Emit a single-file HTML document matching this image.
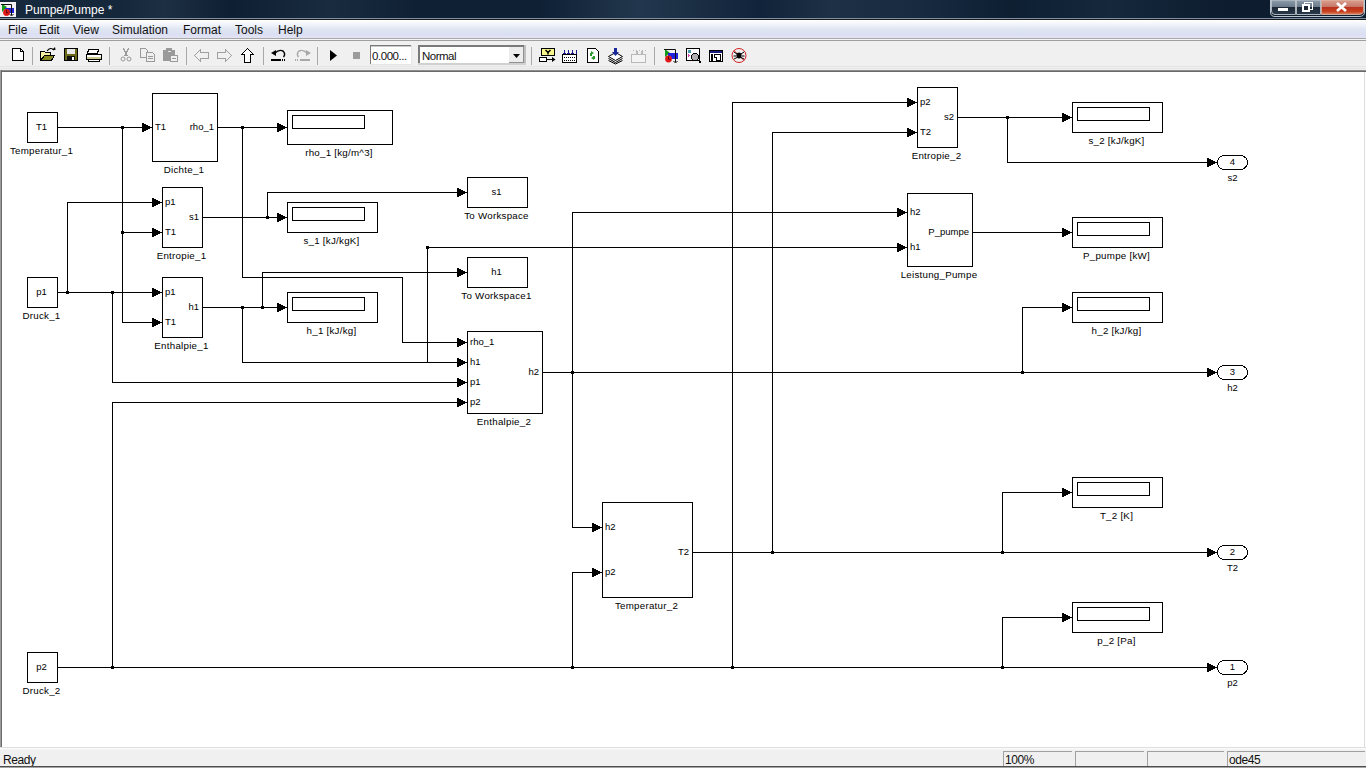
<!DOCTYPE html>
<html><head><meta charset="utf-8">
<style>
html,body{margin:0;padding:0;}
body{width:1366px;height:768px;position:relative;overflow:hidden;background:#fff;font-family:"Liberation Sans",sans-serif;}
.abs{position:absolute;}
#title{left:0;top:0;width:1366px;height:18px;background:linear-gradient(90deg,#17293d 0px,#15273b 120px,#1d2f43 165px,#0f1f33 230px,#192b3f 330px,#0f2035 420px,#0f2035 540px,#22374d 640px,#11233a 760px,#1d3045 830px,#172a40 920px,#0e1f32 1010px,#15283c 1110px,#0d1c2e 1230px,#0d1c2e 1366px);}
#title .t{position:absolute;left:25px;top:2px;color:#fff;font-size:12px;line-height:16px;}
#tl1{left:0;top:18px;width:1366px;height:1px;background:#7d8fa3;}
#tl2{left:0;top:19px;width:1366px;height:1px;background:#1a1a1a;}
#menu{left:0;top:20px;width:1366px;height:18px;background:linear-gradient(180deg,#ffffff 0%,#f4f6fb 20%,#dfe6f3 50%,#dcdff3 80%,#e2e4f4 100%);}
#menu span{position:absolute;top:3px;font-size:12px;line-height:14px;color:#111;}
#ml1{left:0;top:38px;width:1366px;height:1px;background:#a9a9a9;}
#ml2{left:0;top:39px;width:1366px;height:1px;background:#f4f4f4;}
#ml3{left:0;top:40px;width:1366px;height:1px;background:#a0a0a0;}
#tool{left:0;top:41px;width:1366px;height:30px;background:#f0f0f0;}
.sep{position:absolute;top:47px;width:1px;height:18px;background:#a8a8a8;}
#canvasTop{left:0;top:70px;width:1366px;height:2px;background:linear-gradient(180deg,#8c8c8c 50%,#6a6a6a 50%);}
#canvasRight{left:1364px;top:72px;width:1px;height:676px;background:#dcdcdc;}
#tbh1{left:0;top:66px;width:1366px;height:1px;background:#e4e4e4;}#tbh2{left:0;top:68px;width:1366px;height:1px;background:#e6e6e6;}
#canvasLeft{left:0;top:70px;width:2px;height:677px;background:linear-gradient(90deg,#9c9c9c 50%,#6a6a6a 50%);}
#canvasBot{left:0;top:747px;width:1366px;height:1px;background:#dedede;}
#status{left:0;top:748px;width:1366px;height:18px;background:linear-gradient(180deg,#fafafa 0,#fafafa 1px,#f0f0f0 2px);}
#sb1{left:0;top:766px;width:1366px;height:2px;background:linear-gradient(180deg,#4e4e4e 50%,#a4a4a4 50%);}
.sp{position:absolute;top:751px;height:15px;border-left:1px solid #a0a0a0;border-top:1px solid #a0a0a0;box-sizing:border-box;}
.st{position:absolute;top:753px;font-size:12px;letter-spacing:-0.4px;line-height:14px;color:#111;}
.diag{position:absolute;left:0;top:0;}
.wb{position:absolute;top:0;height:16px;border:1px solid #5c6b7c;border-top:none;box-sizing:border-box;}
</style></head><body>
<div id="title" class="abs">
  <svg class="abs" style="left:0;top:0" width="18" height="18" viewBox="0 0 18 18">
    <rect x="0" y="2" width="16" height="15" fill="#f2f0f2"/>
    <polygon points="2,4 2,12 7,7" fill="#129a1a"/>
    <rect x="5" y="8" width="9" height="5" fill="#2020d8"/>
    <path d="M1,4.5 H11.5 V15" fill="none" stroke="#111" stroke-width="1"/>
    <path d="M9.5,14 L11.5,16 L13.5,14" fill="none" stroke="#111" stroke-width="1"/>
    <circle cx="6.5" cy="12.5" r="3.4" fill="#e01818"/>
    <path d="M6.5,10 V12.8 H8.5" fill="none" stroke="#5a0a0a" stroke-width="1"/>
  </svg>
  <div class="t">Pumpe/Pumpe *</div>
</div>
<div id="tl1" class="abs"></div><div id="tl2" class="abs"></div>
<svg class="abs" style="left:1266px;top:0" width="100" height="19" viewBox="0 0 100 19">
<defs>
<linearGradient id="gmin" x1="0" y1="0" x2="0" y2="1"><stop offset="0" stop-color="#8f9daa"/><stop offset="0.45" stop-color="#6c7c8c"/><stop offset="0.5" stop-color="#1c2836"/><stop offset="1" stop-color="#2a3a4c"/></linearGradient>
<linearGradient id="gcl" x1="0" y1="0" x2="0" y2="1"><stop offset="0" stop-color="#d9a08e"/><stop offset="0.45" stop-color="#c8786a"/><stop offset="0.5" stop-color="#b8321c"/><stop offset="0.8" stop-color="#c8401e"/><stop offset="1" stop-color="#d88a6a"/></linearGradient>
</defs>
<path d="M4.5,0 V12 Q4.5,16.5 9,16.5 H93 Q98.5,16.5 98.5,12 V0" fill="#0e1c2c" stroke="#b8c4d0" stroke-width="1"/>
<path d="M5.5,0 V11 Q5.5,14.5 9,14.5 H29.5 V0 Z" fill="url(#gmin)" stroke="#d0d8e0" stroke-width="0.8"/>
<path d="M30.5,0 V14.5 H54.5 V0 Z" fill="url(#gmin)" stroke="#d0d8e0" stroke-width="0.8"/>
<path d="M55.5,0 V14.5 H92 Q97.5,14.5 97.5,11 V0 Z" fill="url(#gcl)" stroke="#e8c0b0" stroke-width="0.8"/>
<rect x="12" y="8" width="10" height="3" fill="#fff"/>
<rect x="38.5" y="2.5" width="8" height="7" fill="none" stroke="#fff" stroke-width="1"/>
<rect x="37" y="5" width="6" height="6" fill="#1c2836" stroke="#fff" stroke-width="2"/>
<path d="M71,3 L80,11 M80,3 L71,11" stroke="#fff" stroke-width="2.6"/>
</svg>
<div id="menu" class="abs">
  <span style="left:8px">File</span><span style="left:39px">Edit</span><span style="left:73px">View</span><span style="left:112px">Simulation</span><span style="left:183px">Format</span><span style="left:235px">Tools</span><span style="left:278px">Help</span>
</div>
<div id="ml1" class="abs"></div><div id="ml2" class="abs"></div><div id="ml3" class="abs"></div>
<div id="tool" class="abs"></div>
<svg class="abs" style="left:0;top:0" width="760" height="71" viewBox="0 0 760 71" shape-rendering="crispEdges">
<!-- separators -->
<g fill="#a9a9a9">
<rect x="32" y="47" width="1" height="18"/><rect x="109" y="47" width="1" height="18"/><rect x="186" y="47" width="1" height="18"/>
<rect x="263" y="47" width="1" height="18"/><rect x="317" y="47" width="1" height="18"/><rect x="531" y="47" width="1" height="18"/>
<rect x="654" y="47" width="1" height="18"/>
</g>
<!-- new -->
<path d="M12.5,48.5 H20.5 L23.5,51.5 V60.5 H12.5 Z" fill="#fff" stroke="#000"/>
<path d="M20.5,48.5 V51.5 H23.5" fill="none" stroke="#000"/>
<!-- open -->
<path d="M40.5,51.5 H44.5 L45.5,52.5 H50.5 V55.5 H44.5 L40.5,60.5 Z" fill="#f4f0a0" stroke="#000"/>
<path d="M40.5,60.5 L44.5,55.5 H54.5 L51.5,60.5 Z" fill="#8a8a22" stroke="#000"/>
<path d="M47,51 Q50.5,46.5 54,50" fill="none" stroke="#000" stroke-width="1.1" shape-rendering="auto"/>
<path d="M52,50 L55.5,50 L55,47 Z" fill="#000" shape-rendering="auto"/>
<!-- save -->
<rect x="64" y="48" width="14" height="13" fill="#000"/>
<rect x="65" y="49" width="12" height="11" fill="#6b6b1a"/>
<rect x="67" y="49" width="8" height="5" fill="#e8e8e8"/>
<rect x="67" y="56" width="8" height="4" fill="#111"/>
<rect x="72" y="57" width="2" height="3" fill="#fff"/>
<!-- print -->
<path d="M88.5,49.5 H98.5 L97.5,53.5 H87.5 Z" fill="#fff" stroke="#000"/>
<rect x="86.5" y="54.5" width="15" height="5" fill="#fff" stroke="#000"/>
<rect x="87" y="57" width="14" height="2" fill="#c8c890"/>
<rect x="88.5" y="59.5" width="11" height="1.5" fill="#fff" stroke="#000"/>
<!-- cut -->
<g fill="none" stroke="#9a9a9a">
<path d="M123.5,48.5 L127.5,56.5 M128.5,48.5 L124.5,56.5"/>
<circle cx="123" cy="59" r="2" shape-rendering="auto"/><circle cx="129" cy="59" r="2" shape-rendering="auto"/>
</g>
<!-- copy -->
<g fill="#f0f0f0" stroke="#9a9a9a">
<path d="M140.5,48.5 H145.5 L147.5,50.5 V57.5 H140.5 Z"/>
<path d="M146.5,52.5 H152.5 L154.5,54.5 V61.5 H146.5 Z"/>
<path d="M148,56.5 H153 M148,58.5 H153" />
</g>
<!-- paste -->
<rect x="163" y="50" width="12" height="11" rx="1" fill="#9a9a9a"/>
<rect x="166" y="48" width="6" height="3" fill="#9a9a9a"/>
<rect x="167.5" y="50.5" width="3" height="1" fill="#e8e8e8"/>
<rect x="170.5" y="55.5" width="7" height="6" fill="#f0f0f0" stroke="#9a9a9a"/>
<path d="M172,58.5 H176" stroke="#9a9a9a"/>
<!-- back -->
<path d="M194.5,55.5 L200.5,49.5 V52.5 H208.5 V58.5 H200.5 V61.5 Z" fill="#f0f0f0" stroke="#a0a0a0"/>
<!-- forward -->
<path d="M231.5,55.5 L225.5,49.5 V52.5 H217.5 V58.5 H225.5 V61.5 Z" fill="#f0f0f0" stroke="#a0a0a0"/>
<!-- up -->
<path d="M247.5,48.5 L253.5,54.5 H250.5 V62.5 H244.5 V54.5 H241.5 Z" fill="#fff" stroke="#000"/>
<!-- undo -->
<path d="M274.5,53.5 Q279,49 283,51 Q286,54 283.5,57" fill="none" stroke="#000" stroke-width="1.4" shape-rendering="auto"/>
<path d="M271,53 L276,50 L276,56 Z" fill="#000" shape-rendering="auto"/>
<rect x="271" y="59" width="10" height="2" fill="#000"/><rect x="282" y="59" width="1" height="2" fill="#000"/><rect x="284" y="59" width="1" height="2" fill="#000"/>
<!-- redo -->
<path d="M307.5,53.5 Q303,49 299,51 Q296,54 298.5,57" fill="none" stroke="#a8a8a8" stroke-width="1.4" shape-rendering="auto"/>
<path d="M311,53 L306,50 L306,56 Z" fill="#a8a8a8" shape-rendering="auto"/>
<rect x="300" y="59" width="10" height="2" fill="#a8a8a8"/><rect x="297" y="59" width="1" height="2" fill="#a8a8a8"/><rect x="295" y="59" width="1" height="2" fill="#a8a8a8"/>
<!-- run -->
<path d="M330,50 L337,55.5 L330,61 Z" fill="#000" shape-rendering="auto"/>
<!-- stop -->
<rect x="353" y="52" width="7" height="7" fill="#9c9c9c"/>
<!-- edit box -->
<rect x="370" y="45" width="42" height="20" fill="#fff"/>
<rect x="370" y="45" width="42" height="1" fill="#7a7a7a"/><rect x="370" y="45" width="1" height="20" fill="#7a7a7a"/>
<rect x="371" y="46" width="40" height="1" fill="#c8c8c8"/>
<rect x="411" y="45" width="1" height="20" fill="#e4e4e4"/><rect x="370" y="64" width="42" height="1" fill="#e4e4e4"/>
<!-- combo -->
<rect x="418" y="45" width="108" height="20" fill="#fff"/>
<rect x="418" y="45" width="108" height="2" fill="#7a7a7a"/><rect x="418" y="45" width="2" height="20" fill="#7a7a7a"/>
<rect x="524" y="45" width="2" height="20" fill="#c0c0c0"/><rect x="418" y="63" width="108" height="2" fill="#d0d0d0"/>
<rect x="509" y="47" width="15" height="16" fill="#ededed"/>
<rect x="509" y="62" width="15" height="1" fill="#909090"/><rect x="523" y="47" width="1" height="16" fill="#909090"/>
<path d="M513,54 H520 L516.5,58 Z" fill="#000" shape-rendering="auto"/>
<!-- Y block -->
<rect x="541.5" y="48.5" width="13" height="7" fill="#f6f68a" stroke="#000"/>
<path d="M545.5,50 L548,52.5 L550.5,50 M548,52.5 V54.5" fill="none" stroke="#000" stroke-width="1.5" shape-rendering="auto"/>
<rect x="539.5" y="57.5" width="7" height="4" fill="#fff" stroke="#000"/>
<path d="M547,59.5 H553" stroke="#000"/><path d="M552,57 L555.5,59.5 L552,62 Z" fill="#000" shape-rendering="auto"/>
<!-- grid -->
<rect x="562.5" y="54.5" width="14" height="8" fill="#fff" stroke="#000"/>
<g fill="#000"><rect x="564" y="57" width="1" height="1"/><rect x="566" y="57" width="1" height="1"/><rect x="568" y="57" width="1" height="1"/><rect x="570" y="57" width="1" height="1"/><rect x="572" y="57" width="1" height="1"/><rect x="574" y="57" width="1" height="1"/>
<rect x="564" y="60" width="1" height="1"/><rect x="566" y="60" width="1" height="1"/><rect x="568" y="60" width="1" height="1"/><rect x="570" y="60" width="1" height="1"/><rect x="572" y="60" width="1" height="1"/><rect x="574" y="60" width="1" height="1"/></g>
<g fill="#1a1a8a"><rect x="564" y="50" width="1" height="4"/><rect x="568" y="50" width="1" height="4"/><rect x="572" y="50" width="1" height="4"/><rect x="576" y="50" width="1" height="4"/>
<rect x="563" y="53" width="3" height="1"/><rect x="567" y="53" width="3" height="1"/><rect x="571" y="53" width="3" height="1"/></g>
<!-- doc green arrows -->
<path d="M587.5,48.5 H595.5 L598.5,51.5 V62.5 H587.5 Z" fill="#fff" stroke="#000"/>
<path d="M591,51 L594,53 L591,55 Z M594,56 L591,58 L594,60 Z" fill="#2a9a2a" shape-rendering="auto"/>
<rect x="590" y="53" width="2" height="3" fill="#2a9a2a"/><rect x="593" y="56" width="2" height="3" fill="#2a9a2a"/>
<!-- stack -->
<path d="M608.5,56.5 L615.5,52.5 L622.5,56.5 L615.5,60.5 Z" fill="#fff" stroke="#000" shape-rendering="auto"/>
<path d="M608.5,58.5 L615.5,62.5 L622.5,58.5" fill="none" stroke="#000" shape-rendering="auto"/>
<path d="M608.5,60.5 L615.5,64 L622.5,60.5" fill="none" stroke="#000" shape-rendering="auto"/>
<rect x="614" y="48" width="3" height="5" fill="#1a2a9a"/><path d="M612,52 H619 L615.5,56 Z" fill="#1a2a9a" shape-rendering="auto"/>
<!-- gray grid -->
<rect x="631.5" y="54.5" width="14" height="8" fill="#f4f4f4" stroke="#b8b8b8"/>
<g fill="#b8b8b8"><rect x="633" y="50" width="1" height="1"/><rect x="636" y="50" width="1" height="1"/><rect x="639" y="50" width="1" height="1"/><rect x="642" y="50" width="1" height="1"/><rect x="645" y="50" width="1" height="1"/>
<rect x="636" y="51" width="2" height="3"/><rect x="641" y="51" width="2" height="3"/></g>
<!-- library browser -->
<g transform="translate(663,46)" shape-rendering="auto">
<polygon points="2,3 2,11 7,7" fill="#129a1a"/>
<rect x="5" y="7" width="10" height="6" fill="#2020e0"/>
<path d="M1,3.5 H12.5 V16" fill="none" stroke="#111" stroke-width="1"/>
<path d="M10.5,15 L12.5,17 L14.5,15" fill="none" stroke="#111" stroke-width="1"/>
<circle cx="5.5" cy="13" r="3.4" fill="#e01818"/>
<path d="M5.5,10.5 V13.3 H7.5" fill="none" stroke="#5a0a0a" stroke-width="1"/>
</g>
<!-- model explorer -->
<rect x="686.5" y="48.5" width="13" height="12" fill="#fff" stroke="#000"/>
<circle cx="689.5" cy="51.5" r="1.6" fill="#4a9ab0"/><path d="M688,54 L690.5,55.5 L688,57 Z" fill="#e040c0"/>
<circle cx="695" cy="57" r="3.5" fill="#b0b0b0" stroke="#000"/>
<rect x="699" y="61" width="2" height="2" fill="#000"/>
<!-- block params -->
<rect x="709.5" y="50.5" width="13" height="11" fill="#fff" stroke="#000"/>
<rect x="710" y="51" width="12" height="2" fill="#1a1a7a"/>
<rect x="711" y="54" width="2" height="7" fill="#000"/>
<path d="M714.5,54.5 H720.5 V60.5 H716.5 V57.5 H714.5 Z" fill="none" stroke="#000"/>
<!-- debugger -->
<circle cx="739" cy="55.5" r="7" fill="none" stroke="#d02020" stroke-width="1" shape-rendering="auto"/>
<path d="M734,50.5 L744,60.5" stroke="#d02020" shape-rendering="auto"/>
<ellipse cx="739" cy="55.5" rx="2.6" ry="3" fill="#000" shape-rendering="auto"/>
<path d="M734,52 L737,54 M744,52 L741,54 M733.5,56 H736 M742,56 H744.5 M734,59 L737,57.5 M744,59 L741,57.5" stroke="#000" shape-rendering="auto"/>
</svg>
<div class="st" style="left:372px;top:49px;font-size:11.5px;letter-spacing:-0.45px;">0.000...</div>
<div class="st" style="left:422px;top:49px;font-size:11.5px;letter-spacing:-0.5px;">Normal</div>

<div id="tbh1" class="abs"></div><div id="tbh2" class="abs"></div><div id="canvasTop" class="abs"></div><div id="canvasRight" class="abs"></div><div id="canvasLeft" class="abs"></div><div id="canvasBot" class="abs"></div>
<svg class="diag" width="1366" height="768" viewBox="0 0 1366 768"><g fill="none" stroke="#000" stroke-width="1" shape-rendering="crispEdges"><rect x="27.5" y="112.5" width="30" height="30"/><rect x="27.5" y="277.5" width="30" height="30"/><rect x="27.5" y="652.5" width="30" height="30"/><rect x="152.5" y="93.5" width="65" height="68"/><rect x="162.5" y="187.5" width="40" height="60"/><rect x="162.5" y="277.5" width="40" height="60"/><rect x="467.5" y="331.5" width="75" height="82"/><rect x="602.5" y="502.5" width="90" height="95"/><rect x="917.5" y="87.5" width="40" height="60"/><rect x="907.5" y="193.5" width="65" height="73"/><rect x="287.5" y="110.5" width="105" height="34"/><rect x="292.5" y="115.5" width="72" height="13"/><rect x="287.5" y="202.5" width="90" height="30"/><rect x="292.5" y="207.5" width="72" height="13"/><rect x="287.5" y="292.5" width="90" height="30"/><rect x="292.5" y="297.5" width="72" height="13"/><rect x="1072.5" y="102.5" width="90" height="30"/><rect x="1077.5" y="107.5" width="72" height="13"/><rect x="1072.5" y="217.5" width="90" height="30"/><rect x="1077.5" y="222.5" width="72" height="13"/><rect x="1072.5" y="292.5" width="90" height="30"/><rect x="1077.5" y="297.5" width="72" height="13"/><rect x="1072.5" y="477.5" width="90" height="30"/><rect x="1077.5" y="482.5" width="72" height="13"/><rect x="1072.5" y="602.5" width="90" height="30"/><rect x="1077.5" y="607.5" width="72" height="13"/><rect x="467.5" y="177.5" width="60" height="30"/><rect x="467.5" y="257.5" width="60" height="30"/><rect x="1217.5" y="155.5" width="30" height="14" rx="7" ry="7"/><rect x="1217.5" y="365.5" width="30" height="14" rx="7" ry="7"/><rect x="1217.5" y="545.5" width="30" height="14" rx="7" ry="7"/><rect x="1217.5" y="660.5" width="30" height="14" rx="7" ry="7"/><polyline points="57.5,127.5 152.5,127.5"/><path fill="#000" stroke="none" d="M142,123h2v9h-2z M144,124h2v7h-2z M146,125h2v5h-2z M148,126h2v3h-2z"/><polyline points="122.5,127.5 122.5,322.5 162.5,322.5"/><path fill="#000" stroke="none" d="M152,318h2v9h-2z M154,319h2v7h-2z M156,320h2v5h-2z M158,321h2v3h-2z"/><polyline points="122.5,232.5 162.5,232.5"/><path fill="#000" stroke="none" d="M152,228h2v9h-2z M154,229h2v7h-2z M156,230h2v5h-2z M158,231h2v3h-2z"/><polyline points="57.5,292.5 162.5,292.5"/><path fill="#000" stroke="none" d="M152,288h2v9h-2z M154,289h2v7h-2z M156,290h2v5h-2z M158,291h2v3h-2z"/><polyline points="67.5,292.5 67.5,202.5 162.5,202.5"/><path fill="#000" stroke="none" d="M152,198h2v9h-2z M154,199h2v7h-2z M156,200h2v5h-2z M158,201h2v3h-2z"/><polyline points="112.5,292.5 112.5,382.5 467.5,382.5"/><path fill="#000" stroke="none" d="M457,378h2v9h-2z M459,379h2v7h-2z M461,380h2v5h-2z M463,381h2v3h-2z"/><polyline points="217.5,127.5 287.5,127.5"/><path fill="#000" stroke="none" d="M277,123h2v9h-2z M279,124h2v7h-2z M281,125h2v5h-2z M283,126h2v3h-2z"/><polyline points="242.5,127.5 242.5,277.5 402.5,277.5 402.5,342.5 467.5,342.5"/><path fill="#000" stroke="none" d="M457,338h2v9h-2z M459,339h2v7h-2z M461,340h2v5h-2z M463,341h2v3h-2z"/><polyline points="202.5,217.5 287.5,217.5"/><path fill="#000" stroke="none" d="M277,213h2v9h-2z M279,214h2v7h-2z M281,215h2v5h-2z M283,216h2v3h-2z"/><polyline points="267.5,217.5 267.5,192.5 467.5,192.5"/><path fill="#000" stroke="none" d="M457,188h2v9h-2z M459,189h2v7h-2z M461,190h2v5h-2z M463,191h2v3h-2z"/><polyline points="202.5,307.5 287.5,307.5"/><path fill="#000" stroke="none" d="M277,303h2v9h-2z M279,304h2v7h-2z M281,305h2v5h-2z M283,306h2v3h-2z"/><polyline points="242.5,307.5 242.5,362.5 467.5,362.5"/><path fill="#000" stroke="none" d="M457,358h2v9h-2z M459,359h2v7h-2z M461,360h2v5h-2z M463,361h2v3h-2z"/><polyline points="262.5,307.5 262.5,272.5 467.5,272.5"/><path fill="#000" stroke="none" d="M457,268h2v9h-2z M459,269h2v7h-2z M461,270h2v5h-2z M463,271h2v3h-2z"/><polyline points="427.5,362.5 427.5,247.5 907.5,247.5"/><path fill="#000" stroke="none" d="M897,243h2v9h-2z M899,244h2v7h-2z M901,245h2v5h-2z M903,246h2v3h-2z"/><polyline points="57.5,667.5 1217.5,667.5"/><path fill="#000" stroke="none" d="M1207,663h2v9h-2z M1209,664h2v7h-2z M1211,665h2v5h-2z M1213,666h2v3h-2z"/><polyline points="112.5,667.5 112.5,402.5 467.5,402.5"/><path fill="#000" stroke="none" d="M457,398h2v9h-2z M459,399h2v7h-2z M461,400h2v5h-2z M463,401h2v3h-2z"/><polyline points="572.5,667.5 572.5,572.5 602.5,572.5"/><path fill="#000" stroke="none" d="M592,568h2v9h-2z M594,569h2v7h-2z M596,570h2v5h-2z M598,571h2v3h-2z"/><polyline points="732.5,667.5 732.5,102.5 917.5,102.5"/><path fill="#000" stroke="none" d="M907,98h2v9h-2z M909,99h2v7h-2z M911,100h2v5h-2z M913,101h2v3h-2z"/><polyline points="1002.5,667.5 1002.5,617.5 1072.5,617.5"/><path fill="#000" stroke="none" d="M1062,613h2v9h-2z M1064,614h2v7h-2z M1066,615h2v5h-2z M1068,616h2v3h-2z"/><polyline points="542.5,372.5 1217.5,372.5"/><path fill="#000" stroke="none" d="M1207,368h2v9h-2z M1209,369h2v7h-2z M1211,370h2v5h-2z M1213,371h2v3h-2z"/><polyline points="572.5,372.5 572.5,212.5 907.5,212.5"/><path fill="#000" stroke="none" d="M897,208h2v9h-2z M899,209h2v7h-2z M901,210h2v5h-2z M903,211h2v3h-2z"/><polyline points="572.5,372.5 572.5,527.5 602.5,527.5"/><path fill="#000" stroke="none" d="M592,523h2v9h-2z M594,524h2v7h-2z M596,525h2v5h-2z M598,526h2v3h-2z"/><polyline points="1022.5,372.5 1022.5,307.5 1072.5,307.5"/><path fill="#000" stroke="none" d="M1062,303h2v9h-2z M1064,304h2v7h-2z M1066,305h2v5h-2z M1068,306h2v3h-2z"/><polyline points="692.5,552.5 1217.5,552.5"/><path fill="#000" stroke="none" d="M1207,548h2v9h-2z M1209,549h2v7h-2z M1211,550h2v5h-2z M1213,551h2v3h-2z"/><polyline points="772.5,552.5 772.5,132.5 917.5,132.5"/><path fill="#000" stroke="none" d="M907,128h2v9h-2z M909,129h2v7h-2z M911,130h2v5h-2z M913,131h2v3h-2z"/><polyline points="1002.5,552.5 1002.5,492.5 1072.5,492.5"/><path fill="#000" stroke="none" d="M1062,488h2v9h-2z M1064,489h2v7h-2z M1066,490h2v5h-2z M1068,491h2v3h-2z"/><polyline points="957.5,117.5 1072.5,117.5"/><path fill="#000" stroke="none" d="M1062,113h2v9h-2z M1064,114h2v7h-2z M1066,115h2v5h-2z M1068,116h2v3h-2z"/><polyline points="1007.5,117.5 1007.5,162.5 1217.5,162.5"/><path fill="#000" stroke="none" d="M1207,158h2v9h-2z M1209,159h2v7h-2z M1211,160h2v5h-2z M1213,161h2v3h-2z"/><polyline points="972.5,232.5 1072.5,232.5"/><path fill="#000" stroke="none" d="M1062,228h2v9h-2z M1064,229h2v7h-2z M1066,230h2v5h-2z M1068,231h2v3h-2z"/><rect fill="#000" stroke="none" x="121" y="126" width="3" height="3"/><rect fill="#000" stroke="none" x="121" y="231" width="3" height="3"/><rect fill="#000" stroke="none" x="66" y="291" width="3" height="3"/><rect fill="#000" stroke="none" x="111" y="291" width="3" height="3"/><rect fill="#000" stroke="none" x="241" y="126" width="3" height="3"/><rect fill="#000" stroke="none" x="266" y="216" width="3" height="3"/><rect fill="#000" stroke="none" x="241" y="306" width="3" height="3"/><rect fill="#000" stroke="none" x="261" y="306" width="3" height="3"/><rect fill="#000" stroke="none" x="426" y="246" width="3" height="3"/><rect fill="#000" stroke="none" x="111" y="666" width="3" height="3"/><rect fill="#000" stroke="none" x="571" y="666" width="3" height="3"/><rect fill="#000" stroke="none" x="731" y="666" width="3" height="3"/><rect fill="#000" stroke="none" x="1001" y="666" width="3" height="3"/><rect fill="#000" stroke="none" x="571" y="371" width="3" height="3"/><rect fill="#000" stroke="none" x="1021" y="371" width="3" height="3"/><rect fill="#000" stroke="none" x="771" y="551" width="3" height="3"/><rect fill="#000" stroke="none" x="1001" y="551" width="3" height="3"/><rect fill="#000" stroke="none" x="1006" y="116" width="3" height="3"/></g><g fill="#000" font-family="Liberation Sans, sans-serif"><text x="41.5" y="130" text-anchor="middle" font-size="9.5">T1</text><text x="41.5" y="154" text-anchor="middle" font-size="9.75" letter-spacing="0.25">Temperatur_1</text><text x="41.5" y="295" text-anchor="middle" font-size="9.5">p1</text><text x="41.5" y="319" text-anchor="middle" font-size="9.75" letter-spacing="0.25">Druck_1</text><text x="41.5" y="670" text-anchor="middle" font-size="9.5">p2</text><text x="41.5" y="694" text-anchor="middle" font-size="9.75" letter-spacing="0.25">Druck_2</text><text x="155" y="130" text-anchor="start" font-size="9.5">T1</text><text x="214" y="130" text-anchor="end" font-size="9.5">rho_1</text><text x="184.0" y="173" text-anchor="middle" font-size="9.75" letter-spacing="0.25">Dichte_1</text><text x="165" y="205" text-anchor="start" font-size="9.5">p1</text><text x="165" y="235" text-anchor="start" font-size="9.5">T1</text><text x="199" y="220" text-anchor="end" font-size="9.5">s1</text><text x="181.5" y="259" text-anchor="middle" font-size="9.75" letter-spacing="0.25">Entropie_1</text><text x="165" y="295" text-anchor="start" font-size="9.5">p1</text><text x="165" y="325" text-anchor="start" font-size="9.5">T1</text><text x="199" y="310" text-anchor="end" font-size="9.5">h1</text><text x="181.5" y="349" text-anchor="middle" font-size="9.75" letter-spacing="0.25">Enthalpie_1</text><text x="470" y="345" text-anchor="start" font-size="9.5">rho_1</text><text x="470" y="365" text-anchor="start" font-size="9.5">h1</text><text x="470" y="385" text-anchor="start" font-size="9.5">p1</text><text x="470" y="405" text-anchor="start" font-size="9.5">p2</text><text x="539" y="375" text-anchor="end" font-size="9.5">h2</text><text x="504.0" y="425" text-anchor="middle" font-size="9.75" letter-spacing="0.25">Enthalpie_2</text><text x="605" y="530" text-anchor="start" font-size="9.5">h2</text><text x="605" y="575" text-anchor="start" font-size="9.5">p2</text><text x="689" y="555" text-anchor="end" font-size="9.5">T2</text><text x="646.5" y="609" text-anchor="middle" font-size="9.75" letter-spacing="0.25">Temperatur_2</text><text x="920" y="105" text-anchor="start" font-size="9.5">p2</text><text x="920" y="135" text-anchor="start" font-size="9.5">T2</text><text x="954" y="120" text-anchor="end" font-size="9.5">s2</text><text x="936.5" y="159" text-anchor="middle" font-size="9.75" letter-spacing="0.25">Entropie_2</text><text x="910" y="215" text-anchor="start" font-size="9.5">h2</text><text x="910" y="250" text-anchor="start" font-size="9.5">h1</text><text x="969" y="235" text-anchor="end" font-size="9.5">P_pumpe</text><text x="939.0" y="278" text-anchor="middle" font-size="9.75" letter-spacing="0.25">Leistung_Pumpe</text><text x="339.0" y="156" text-anchor="middle" font-size="9.75" letter-spacing="0.25">rho_1 [kg/m^3]</text><text x="331.5" y="244" text-anchor="middle" font-size="9.75" letter-spacing="0.25">s_1 [kJ/kgK]</text><text x="331.5" y="334" text-anchor="middle" font-size="9.75" letter-spacing="0.25">h_1 [kJ/kg]</text><text x="1116.5" y="144" text-anchor="middle" font-size="9.75" letter-spacing="0.25">s_2 [kJ/kgK]</text><text x="1116.5" y="259" text-anchor="middle" font-size="9.75" letter-spacing="0.25">P_pumpe [kW]</text><text x="1116.5" y="334" text-anchor="middle" font-size="9.75" letter-spacing="0.25">h_2 [kJ/kg]</text><text x="1116.5" y="519" text-anchor="middle" font-size="9.75" letter-spacing="0.25">T_2 [K]</text><text x="1116.5" y="644" text-anchor="middle" font-size="9.75" letter-spacing="0.25">p_2 [Pa]</text><text x="496.5" y="195" text-anchor="middle" font-size="9.5">s1</text><text x="496.5" y="219" text-anchor="middle" font-size="9.75" letter-spacing="0.25">To Workspace</text><text x="496.5" y="275" text-anchor="middle" font-size="9.5">h1</text><text x="496.5" y="299" text-anchor="middle" font-size="9.75" letter-spacing="0.25">To Workspace1</text><text x="1232.5" y="165" text-anchor="middle" font-size="9.5">4</text><text x="1232.5" y="181" text-anchor="middle" font-size="9.5">s2</text><text x="1232.5" y="375" text-anchor="middle" font-size="9.5">3</text><text x="1232.5" y="391" text-anchor="middle" font-size="9.5">h2</text><text x="1232.5" y="555" text-anchor="middle" font-size="9.5">2</text><text x="1232.5" y="571" text-anchor="middle" font-size="9.5">T2</text><text x="1232.5" y="670" text-anchor="middle" font-size="9.5">1</text><text x="1232.5" y="686" text-anchor="middle" font-size="9.5">p2</text></g></svg>
<div id="status" class="abs"></div>
<div class="st" style="left:3px">Ready</div>
<div class="sp" style="left:1003px;width:69px"></div>
<div class="sp" style="left:1075px;width:69px"></div>
<div class="sp" style="left:1147px;width:77px"></div>
<div class="sp" style="left:1227px;width:138px"></div>
<div class="st" style="left:1005px">100%</div>
<div class="st" style="left:1229px">ode45</div>
<div id="sb1" class="abs"></div>
</body></html>
